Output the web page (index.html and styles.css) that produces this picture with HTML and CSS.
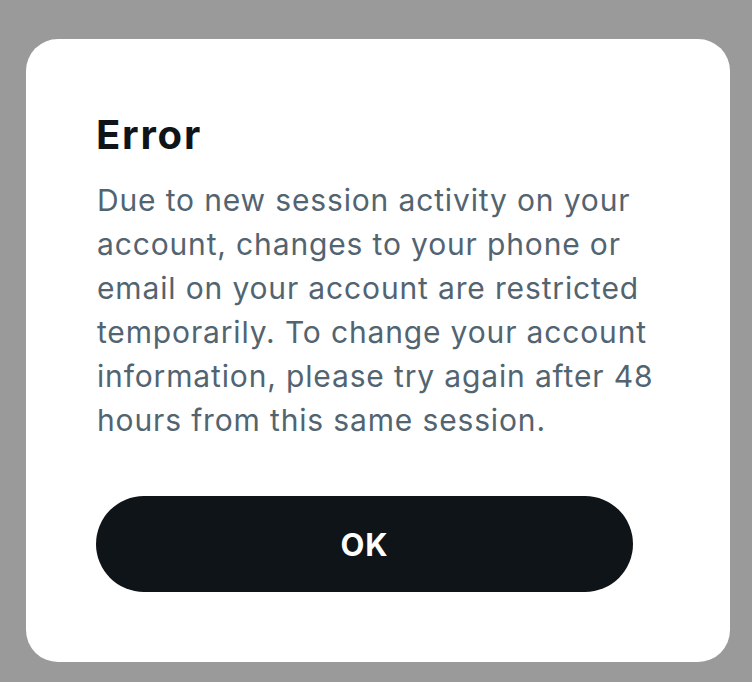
FILE: index.html
```html
<!DOCTYPE html>
<html lang="en">
<head>
<meta charset="utf-8">
<link rel="stylesheet" href="styles.css">
<title>Error</title>
</head>
<body>
<div class="overlay">
  <div class="dialog">
    <h1 class="title">Error</h1>
    <p class="message">Due to new session activity on your account, changes to your phone or email on your account are restricted temporarily. To change your account information, please try again after 48 hours from this same session.</p>
    <button class="ok-btn" type="button">OK</button>
  </div>
</div>
</body>
</html>
```

FILE: styles.css
```css
* { box-sizing: border-box; }
html, body {
  margin: 0;
  padding: 0;
  width: 752px;
  height: 682px;
  background: #9a9a9a;
  overflow: hidden;
}
body {
  font-family: "Inter", "Roboto", sans-serif;
}
.overlay {
  padding: 39px 22px 20px 26px;
}
.dialog {
  width: 704px;
  height: 623px;
  background: #ffffff;
  border-radius: 32px;
  padding: 72px 60px 0 70px;
  display: flex;
  flex-direction: column;
  align-items: flex-start;
}
.title {
  margin: 0;
  font-size: 40px;
  font-weight: 700;
  letter-spacing: 1.8px;
  line-height: 48px;
  color: #0f1419;
}
.message {
  margin: 19px 0 0 1px;
  width: 570px;
  font-size: 30px;
  line-height: 44px;
  letter-spacing: 0.85px;
  font-weight: 400;
  color: #536471;
}
.ok-btn {
  margin-top: 54px;
  width: 537px;
  height: 96px;
  border: 0;
  border-radius: 48px;
  background: #0f1419;
  color: #ffffff;
  font-family: inherit;
  font-size: 31px;
  font-weight: 700;
  letter-spacing: 0.8px;
}
```
